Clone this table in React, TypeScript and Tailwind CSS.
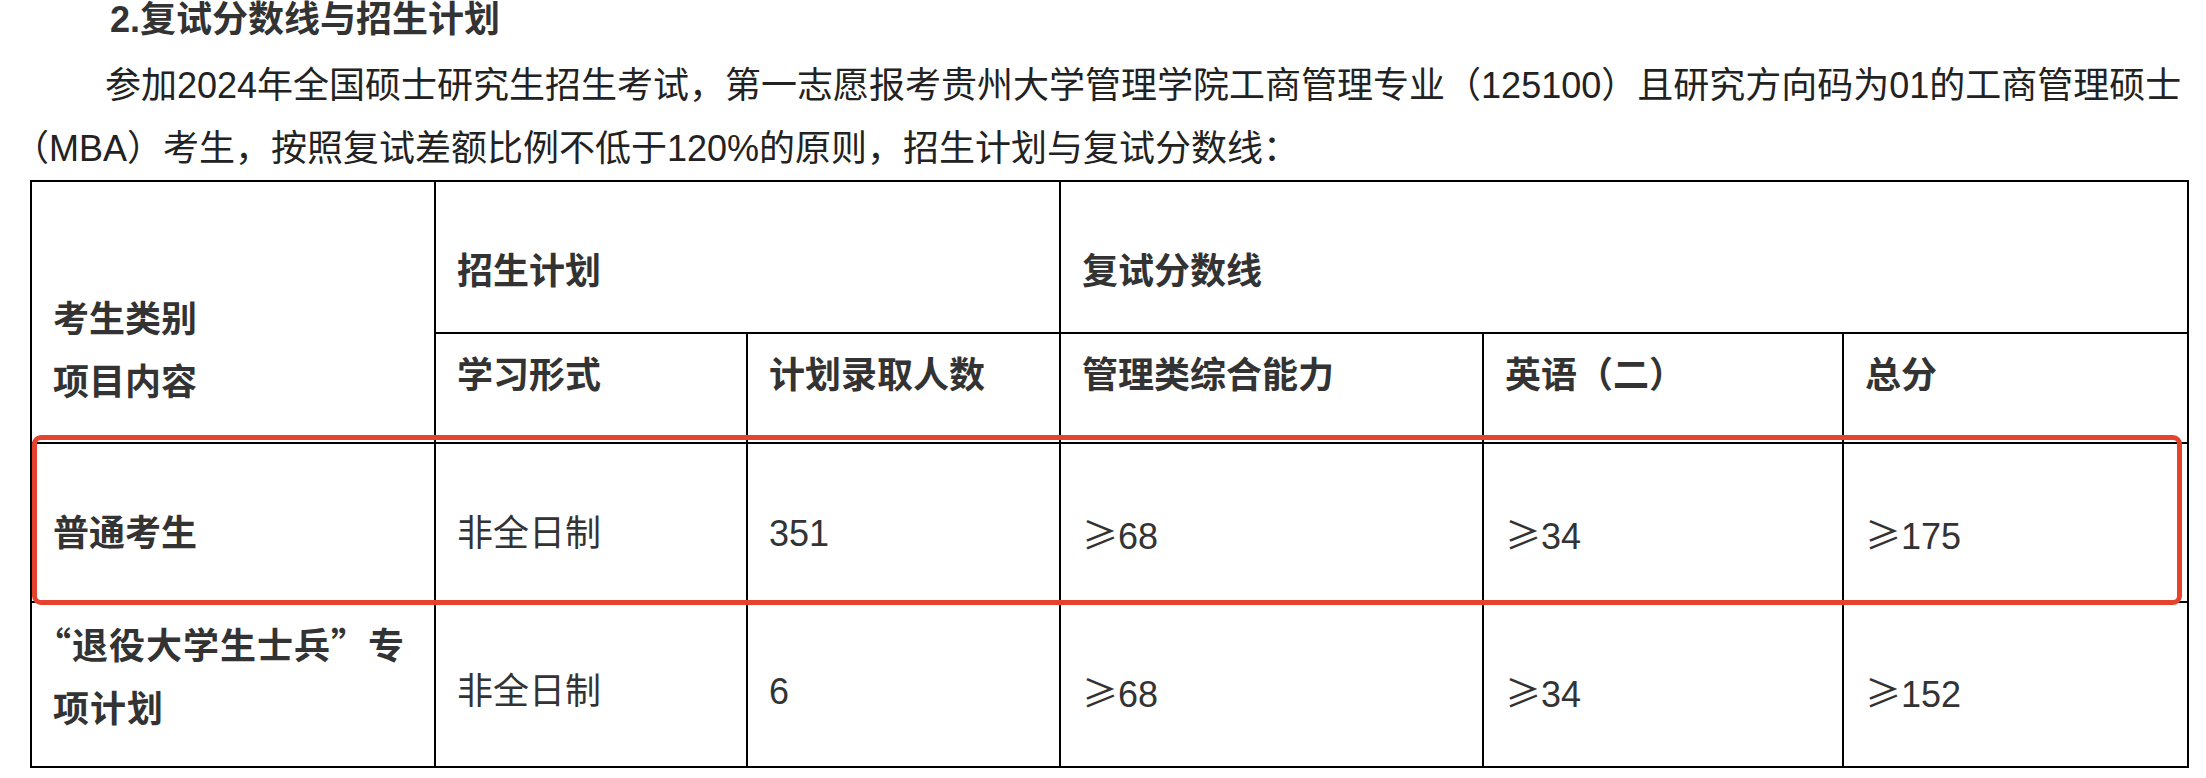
import React from "react";

const cell = "border-r-2 border-b-2 border-black pl-[21px] pr-3 leading-[63px]";

function Ge({ v }: { v: string }) {
  return (
    <span>
      <span className="font-['Noto_Sans_CJK_SC',sans-serif]">≥</span>
      {v}
    </span>
  );
}

export default function App() {
  return (
    <main className="min-h-screen bg-white font-['Liberation_Sans','Noto_Sans_CJK_SC',sans-serif] text-[#222]">
      {/* heading */}
      <h2 className="pl-[110px] text-[36px] leading-[40px] font-bold text-[#333]">
        2.复试分数线与招生计划
      </h2>

      {/* intro paragraph */}
      <p className="mt-[14px] pl-[31px] indent-[74px] text-[36px] leading-[63px] whitespace-nowrap [text-spacing-trim:trim-start]">
        参加2024年全国硕士研究生招生考试，第一志愿报考贵州大学管理学院工商管理专业（125100）且研究方向码为01的工商管理硕士
        <br />
        （MBA）考生，按照复试差额比例不低于120%的原则，招生计划与复试分数线：
      </p>

      {/* table */}
      <div className="relative ml-[30px] w-fit">
        <div className="grid grid-cols-[404px_312px_313px_423px_360px_345px] grid-rows-[152px_110px_159px_165px] border-l-2 border-t-2 border-black text-[36px] text-[#333]">
          <div className={`${cell} row-span-2 pt-[106px] font-bold`}>
            <div>考生类别</div>
            <div>项目内容</div>
          </div>
          <div className={`${cell} col-span-2 pt-[58px] font-bold`}>招生计划</div>
          <div className={`${cell} col-span-3 pt-[58px] font-bold`}>复试分数线</div>

          <div className={`${cell} pt-[10px] font-bold`}>学习形式</div>
          <div className={`${cell} pt-[10px] font-bold`}>计划录取人数</div>
          <div className={`${cell} pt-[10px] font-bold`}>管理类综合能力</div>
          <div className={`${cell} pt-[10px] font-bold`}>英语（二）</div>
          <div className={`${cell} pt-[10px] font-bold`}>总分</div>

          <div className={`${cell} pt-[58px] font-bold`}>普通考生</div>
          <div className={`${cell} pt-[58px]`}>非全日制</div>
          <div className={`${cell} pt-[58px]`}>351</div>
          <div className={`${cell} pt-[58px]`}><Ge v="68" /></div>
          <div className={`${cell} pt-[58px]`}><Ge v="34" /></div>
          <div className={`${cell} pt-[58px]`}><Ge v="175" /></div>

          <div className={`${cell} pt-[9px] font-bold tracking-[1px] font-['Noto_Sans_CJK_SC',sans-serif] [text-spacing-trim:trim-start]`}>
            “退役大学生士兵”专项计划
          </div>
          <div className={`${cell} pt-[57px]`}>非全日制</div>
          <div className={`${cell} pt-[57px]`}>6</div>
          <div className={`${cell} pt-[57px]`}><Ge v="68" /></div>
          <div className={`${cell} pt-[57px]`}><Ge v="34" /></div>
          <div className={`${cell} pt-[57px]`}><Ge v="152" /></div>
        </div>

        {/* highlight box around the regular row */}
        <div className="pointer-events-none absolute left-[2px] top-[255px] h-[170px] w-[2150px] rounded-[9px] border-[5px] border-[#e6432e]" />
      </div>
    </main>
  );
}
